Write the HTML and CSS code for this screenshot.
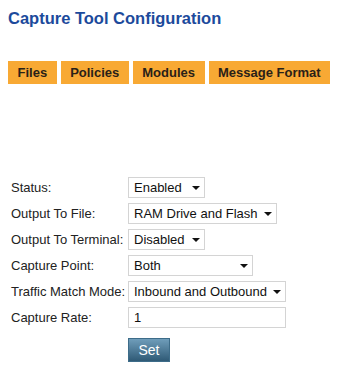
FILE: index.html
```html
<!DOCTYPE html>
<html>
<head>
<meta charset="utf-8">
<link rel="stylesheet" href="styles.css">
</head>
<body>
<div class="page">
  <h1 class="title">Capture Tool Configuration</h1>
  <nav class="tabs">
    <span class="tab">Files</span>
    <span class="tab">Policies</span>
    <span class="tab">Modules</span>
    <span class="tab">Message Format</span>
  </nav>
  <form class="form">
    <label class="label">Status:</label>
    <span class="sel w-76"><select><option>Enabled</option></select></span>
    <label class="label">Output To File:</label>
    <span class="sel w-148"><select><option>RAM Drive and Flash</option></select></span>
    <label class="label">Output To Terminal:</label>
    <span class="sel w-76"><select><option>Disabled</option></select></span>
    <label class="label">Capture Point:</label>
    <span class="sel w-124"><select><option>Both</option></select></span>
    <label class="label">Traffic Match Mode:</label>
    <span class="sel w-158"><select><option>Inbound and Outbound</option></select></span>
    <label class="label">Capture Rate:</label>
    <input class="input" type="text" value="1">
    <span></span>
    <button class="btn" type="button">Set</button>
  </form>
</div>
</body>
</html>
```

FILE: styles.css
```css
html, body {
  margin: 0;
  background: #ffffff;
}
.page {
  padding: 8px;
  font-family: "Liberation Sans", Arial, sans-serif;
}
.title {
  margin: 0;
  font-size: 16.5px;
  line-height: 20px;
  font-weight: bold;
  color: #1c4a9c;
}
.tabs {
  display: flex;
  gap: 4px;
  margin-top: 33px;
}
.tab {
  background: #f8a934;
  color: #2a2118;
  font-size: 13px;
  font-weight: bold;
  height: 23px;
  line-height: 23px;
  padding: 0 9.5px;
}
.form {
  display: grid;
  grid-template-columns: 117px auto;
  justify-content: start;
  align-items: center;
  row-gap: 5px;
  margin-top: 93px;
  padding-left: 3px;
}
.label {
  font-size: 13px;
  color: #222222;
}
.sel {
  position: relative;
  display: block;
  height: 21px;
}
.sel select {
  appearance: none;
  -webkit-appearance: none;
  width: 100%;
  height: 21px;
  margin: 0;
  padding: 0 0 0 5px;
  border: 1px solid #d4d4d4;
  border-radius: 0;
  background: #ffffff;
  font-family: "Liberation Sans", Arial, sans-serif;
  font-size: 13px;
  color: #111111;
}
.sel::after {
  content: "";
  position: absolute;
  right: 5px;
  top: 9px;
  border-left: 4px solid transparent;
  border-right: 4px solid transparent;
  border-top: 4px solid #111111;
}
.w-76 { width: 77px; }
.w-148 { width: 149px; }
.w-124 { width: 125px; }
.w-158 { width: 158px; }
.input {
  box-sizing: border-box;
  width: 158px;
  height: 21px;
  margin: 0;
  padding: 0 0 0 5px;
  border: 1px solid #d4d4d4;
  font-family: "Liberation Sans", Arial, sans-serif;
  font-size: 13px;
  color: #111111;
}
.btn {
  justify-self: start;
  margin-top: 5px;
  width: 42px;
  height: 24px;
  padding: 0;
  border: 1px solid #3d6c89;
  background: linear-gradient(#6f9dba, #2f5a76);
  color: #ffffff;
  font-family: "Liberation Sans", Arial, sans-serif;
  font-size: 14px;
}
```
